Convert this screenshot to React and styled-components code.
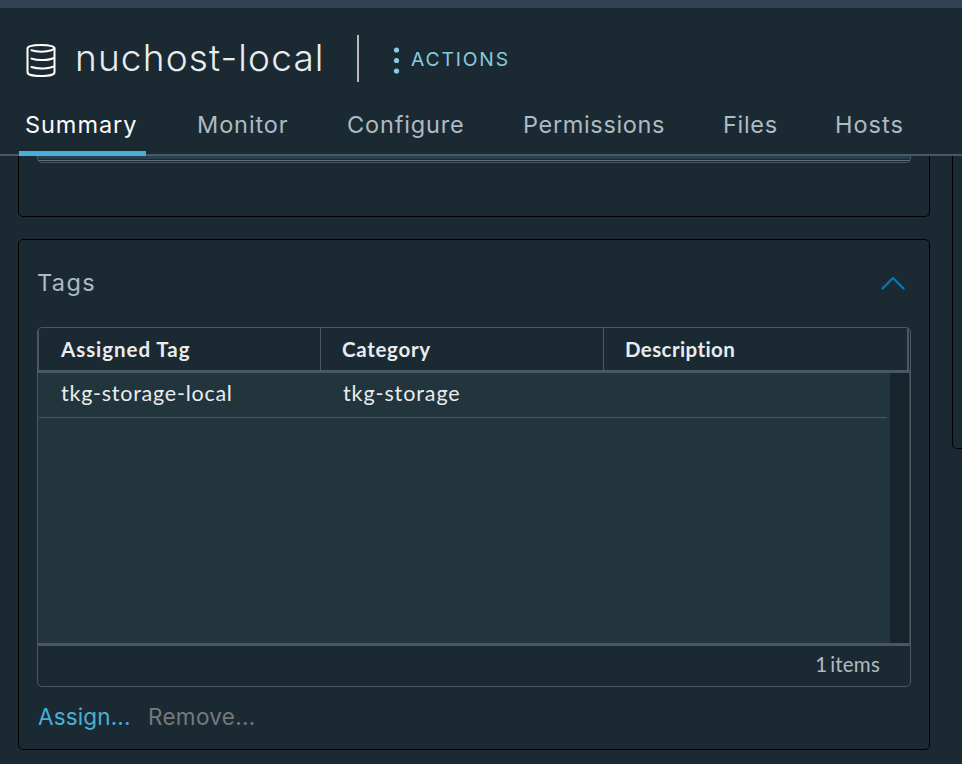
import React from "react";
import styled, { createGlobalStyle } from "styled-components";

const c = {
  bg: "#1b2a32",
  line: "#495865",
  text: "#adbbc4",
  bright: "#e9ecef",
  panel: "#22343c",
};
const display = `Inter, "Liberation Sans", sans-serif`;
const body = `Lato, "Liberation Sans", sans-serif`;

const Global = createGlobalStyle`
  * { box-sizing: border-box; }
  body { margin: 0; background: ${c.bg}; overflow: hidden; }
`;

const Page = styled.div`
  width: 962px;
  height: 764px;
  overflow: hidden;
  display: flex;
  flex-direction: column;
  background: ${c.bg};
  color: ${c.text};
  font-family: ${display};
  font-variant-ligatures: none;
  white-space: nowrap;
`;

const TopStrip = styled.div`
  height: 8px;
  flex: none;
  background: #314351;
`;

const Header = styled.header`
  height: 88px;
  flex: none;
  display: flex;
  align-items: center;
  padding: 12px 0 0 25px;

  > svg {
    margin-top: 3px;
  }
`;

const Title = styled.h1`
  margin: 0 0 0 18px;
  width: 282px;
  flex: none;
  font-size: 37px;
  line-height: 46px;
  font-weight: 300;
  letter-spacing: 1.15px;
  color: ${c.bright};
`;

const Divider = styled.div`
  width: 2px;
  height: 47px;
  background: #b9b9b9;
`;

const Actions = styled.button`
  display: flex;
  align-items: center;
  gap: 11px;
  margin: 3px 0 0 34px;
  padding: 0;
  border: 0;
  background: none;
  color: #89cbdf;
  font: 400 19.3px/24px ${display};
  letter-spacing: 1.85px;
`;

const ActionsLabel = styled.span`
  margin-top: -2px;
`;

const Tabs = styled.nav`
  height: 60px;
  flex: none;
  display: flex;
  padding-left: 19px;
  border-bottom: 2px solid ${c.line};
`;

const Tab = styled.a`
  height: 60px;
  width: ${(p) => p.$w}px;
  margin-right: ${(p) => p.$gap}px;
  padding: 14px 0 0 6px;
  font-size: 23.5px;
  line-height: 30px;
  font-weight: 400;
  letter-spacing: ${(p) => p.$ls}px;
  color: ${(p) => (p.$active ? "#fafafa" : c.text)};
  border-bottom: ${(p) => (p.$active ? "5px solid #49afd9" : "0")};
`;

const Main = styled.main`
  flex: 1;
  min-height: 0;
  display: flex;
  align-items: flex-start;
  gap: 22px;
  padding-left: 18px;
`;

const Column = styled.div`
  width: 912px;
  flex: none;
  display: flex;
  flex-direction: column;
  gap: 22px;
`;

const Card = styled.section`
  height: ${(p) => p.$h}px;
  padding: 0 18px;
  border: 1px solid #000;
  border-radius: ${(p) => (p.$cut ? "0 0 5px 5px" : "5px")};
  ${(p) => p.$cut && "border-top: 0;"}
`;

const SideCard = styled(Card)`
  width: 60px;
  flex: none;
  padding: 0;
`;

const GridTail = styled.div`
  height: 7px;
  border: 1px solid ${c.line};
  border-top: 0;
  border-radius: 0 0 5px 5px;
  background: linear-gradient(#28404e 0 3px, ${c.bg} 3px 4px, #5f707b 4px 5px, ${c.bg} 5px);
`;

const CardHead = styled.div`
  height: 87px;
  display: flex;
  align-items: center;
  justify-content: space-between;
  padding: 0 6px 2px 0;
`;

const CardTitle = styled.h2`
  margin: 0;
  font-size: 23.5px;
  line-height: 30px;
  font-weight: 400;
  letter-spacing: 1.4px;
`;

const Grid = styled.div`
  height: 360px;
  border: 1px solid ${c.line};
  border-radius: 5px;
  overflow: hidden;
  font-family: ${body};
`;

const GridHead = styled.div`
  height: 45px;
  display: flex;
  border-bottom: 3px solid ${c.line};
  border-left: 1px solid ${c.line};
`;

const HeadCell = styled.div`
  width: ${(p) => p.$w}px;
  border-right: ${(p) => (p.$last ? 2 : 1)}px solid ${c.line};
  padding: 7px 0 0 ${(p) => p.$pad}px;
  font-size: 20.5px;
  line-height: 28px;
  font-weight: 700;
  letter-spacing: ${(p) => p.$ls}px;
  color: ${c.bright};
`;

const GridBody = styled.div`
  height: 270px;
  display: flex;
  background: ${c.panel};
`;

const Rows = styled.div`
  width: 852px;
`;

const Row = styled.div`
  height: 45px;
  width: 848px;
  margin-left: 1px;
  display: flex;
  border-bottom: 1px solid ${c.line};
`;

const Cell = styled.div`
  width: 282px;
  padding: 6px 0 0 22px;
  font-size: 21.5px;
  line-height: 28px;
  letter-spacing: ${(p) => p.$ls}px;
  color: ${c.bright};
`;

const ScrollTrack = styled.div`
  width: 20px;
  background: #18242b;
  border-right: 1px solid #34444f;
`;

const GridFoot = styled.div`
  height: 43px;
  border-top: 3px solid ${c.line};
  padding: 4px 30px 0 0;
  text-align: right;
  font-size: 20.5px;
  line-height: 28px;
  letter-spacing: 0.2px;
  word-spacing: -2.5px;
`;

const Links = styled.div`
  display: flex;
  gap: 18px;
  padding: 15px 0 0 1px;
`;

const LinkButton = styled.button`
  width: ${(p) => p.$w}px;
  padding: 0;
  border: 0;
  background: none;
  text-align: left;
  font: 400 22.5px/30px ${display};
  letter-spacing: ${(p) => p.$ls}px;
  color: ${(p) => (p.disabled ? "#75797c" : "#49afd9")};
`;

const tabs = [
  ["Summary", 127, 45, 0.95],
  ["Monitor", 104, 46, 0.9],
  ["Configure", 129, 47, 0.85],
  ["Permissions", 154, 46, 0.65],
  ["Files", 66, 46, 0.7],
  ["Hosts", 80, 0, 1],
];

const StorageIcon = () => (
  <svg width="32" height="36" viewBox="0 0 32 36" fill="none" stroke="#fff" strokeWidth="2" strokeLinecap="round">
    <path d="M2.500 6.500C2.500 4.300 8 3 16 3S29.500 4.300 29.500 6.500v23.700c0 2.200-5.400 3.900-13.500 3.900S2.500 32.400 2.500 30.200Z" />
    <path d="M6.500 8.200c5 1.900 14.500 1.900 20 0 1.900-.7 2.800-1.100 3-1.900M6.500 16.600c6.500 2.200 17.500 1.800 22.500-.6M6.500 25c6.500 2.200 17.500 1.800 22.500-.6" />
  </svg>
);

export default function App() {
  return (
    <Page>
      <Global />
      <TopStrip />
      <Header>
        <StorageIcon />
        <Title>nuchost-local</Title>
        <Divider />
        <Actions>
          <svg width="7" height="28" viewBox="0 0 7 28" fill="currentColor">
            <circle cx="3.500" cy="4" r="2.600" />
            <circle cx="3.500" cy="14.500" r="2.600" />
            <circle cx="3.500" cy="25" r="2.600" />
          </svg>
          <ActionsLabel>ACTIONS</ActionsLabel>
        </Actions>
      </Header>
      <Tabs>
        {tabs.map(([name, w, gap, ls], i) => (
          <Tab key={name} $w={w} $gap={gap} $ls={ls} $active={i === 0}>
            {name}
          </Tab>
        ))}
      </Tabs>
      <Main>
        <Column>
          <Card $h={61} $cut>
            <GridTail />
          </Card>
          <Card $h={511}>
            <CardHead>
              <CardTitle>Tags</CardTitle>
              <svg width="24" height="14" viewBox="0 0 24 14" fill="none" stroke="#0079b8" strokeWidth="2.400" strokeLinecap="round" strokeLinejoin="round">
                <path d="M1.500 12.500 12 2l10.500 10.500" />
              </svg>
            </CardHead>
            <Grid>
              <GridHead>
                <HeadCell $w={282} $pad={22} $ls={0.95}>Assigned Tag</HeadCell>
                <HeadCell $w={283} $pad={21} $ls={0.7}>Category</HeadCell>
                <HeadCell $w={305} $pad={21} $ls={0.4} $last>Description</HeadCell>
              </GridHead>
              <GridBody>
                <Rows>
                  <Row>
                    <Cell $ls={0.75}>tkg-storage-local</Cell>
                    <Cell $ls={0.9}>tkg-storage</Cell>
                    <Cell $ls={0} />
                  </Row>
                </Rows>
                <ScrollTrack />
              </GridBody>
              <GridFoot>1 items</GridFoot>
            </Grid>
            <Links>
              <LinkButton $w={92} $ls={0.15}>Assign...</LinkButton>
              <LinkButton $w={110} $ls={0.3} disabled>Remove...</LinkButton>
            </Links>
          </Card>
        </Column>
        <SideCard $h={293} $cut />
      </Main>
    </Page>
  );
}
